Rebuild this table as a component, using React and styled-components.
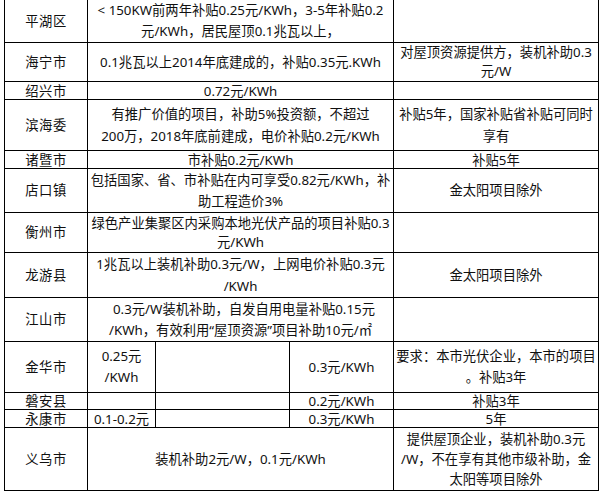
import styled, { createGlobalStyle } from "styled-components";

const GlobalStyle = createGlobalStyle`
  html, body {
    margin: 0;
    padding: 0;
    background: #ffffff;
  }
  body {
    font-family: "Noto Sans", "Noto Sans CJK SC", sans-serif;
  }
`;

const Page = styled.div`
  width: 603px;
  height: 493px;
  overflow: hidden;
  padding-left: 4px;
  box-sizing: border-box;
`;

const Table = styled.table`
  border-collapse: collapse;
  table-layout: fixed;
  width: 594px;
  margin-top: -1px;
  color: #101010;
  font-size: 13.3px;
`;

const Col = styled.col`
  width: ${(p) => p.$w}px;
`;

const Row = styled.tr`
  height: ${(p) => p.$h}px;
`;

const Cell = styled.td`
  border: 1px solid #000;
  padding: 0;
  text-align: center;
  vertical-align: middle;
  white-space: nowrap;
  line-height: ${(p) => p.$lh || 21}px;
`;

const Place = styled(Cell)`
  letter-spacing: 0.5px;
`;

const Line = styled.span`
  display: block;
`;

const widths = [83, 68, 134, 104, 205];

// 每一行: 地区, 行高, 文字行距, 内容
const rows = [
  {
    name: "平湖区",
    h: 43,
    lh: 21,
    cells: [
      { span: 3, lines: ["< 150KW前两年补贴0.25元/KWh，3-5年补贴0.2", "元/KWh，居民屋顶0.1兆瓦以上，"] },
      { lines: [] },
    ],
  },
  {
    name: "海宁市",
    h: 39,
    lh: 19,
    cells: [
      { span: 3, lines: ["0.1兆瓦以上2014年底建成的，补贴0.35元.KWh"] },
      { lines: ["对屋顶资源提供方，装机补助0.3", "元/W"] },
    ],
  },
  {
    name: "绍兴市",
    h: 18,
    lh: 16,
    cells: [{ span: 3, lines: ["0.72元/KWh"] }, { lines: [] }],
  },
  {
    name: "滨海委",
    h: 51,
    lh: 22,
    cells: [
      { span: 3, lines: ["有推广价值的项目，补助5%投资额，不超过", "200万，2018年底前建成，电价补贴0.2元/KWh"] },
      { lines: ["补贴5年，国家补贴省补贴可同时", "享有"] },
    ],
  },
  {
    name: "诸暨市",
    h: 18,
    lh: 16,
    cells: [{ span: 3, lines: ["市补贴0.2元/KWh"] }, { lines: ["补贴5年"] }],
  },
  {
    name: "店口镇",
    h: 44,
    lh: 21,
    cells: [
      { span: 3, lines: ["包括国家、省、市补贴在内可享受0.82元/KWh，补", "助工程造价3%"] },
      { lines: ["金太阳项目除外"] },
    ],
  },
  {
    name: "衡州市",
    h: 40,
    lh: 19,
    cells: [
      { span: 3, lines: ["绿色产业集聚区内采购本地光伏产品的项目补贴0.3", "元/KWh"] },
      { lines: [] },
    ],
  },
  {
    name: "龙游县",
    h: 45,
    lh: 22,
    cells: [
      { span: 3, lines: ["1兆瓦以上装机补助0.3元/W，上网电价补贴0.3元", "/KWh"] },
      { lines: ["金太阳项目除外"] },
    ],
  },
  {
    name: "江山市",
    h: 44,
    lh: 21,
    cells: [
      { span: 3, lines: ["\u00a0\u00a00.3元/W装机补助，自发自用电量补贴0.15元", "/KWh，有效利用“屋顶资源”项目补助10元/㎡"] },
      { lines: [] },
    ],
  },
  {
    name: "金华市",
    h: 51,
    lh: 21,
    cells: [
      { lines: ["0.25元", "/KWh"] },
      { lines: [] },
      { lines: ["0.3元/KWh"] },
      { lines: ["要求：本市光伏企业，本市的项目", "。补贴3年"] },
    ],
  },
  {
    name: "磐安县",
    h: 17,
    lh: 15,
    cells: [{ lines: [] }, { lines: [] }, { lines: ["0.2元/KWh"] }, { lines: ["补贴3年"] }],
  },
  {
    name: "永康市",
    h: 18,
    lh: 16,
    cells: [{ lines: ["0.1-0.2元"] }, { lines: [] }, { lines: ["0.3元/KWh"] }, { lines: ["5年"] }],
  },
  {
    name: "义乌市",
    h: 63,
    lh: 20,
    cells: [
      { span: 3, lines: ["装机补助2元/W，0.1元/KWh"] },
      { lines: ["提供屋顶企业，装机补助0.3元", "/W，不在享有其他市级补助，金", "太阳等项目除外"] },
    ],
  },
];

export default function App() {
  return (
    <Page>
      <GlobalStyle />
      <Table>
        <colgroup>
          {widths.map((w, i) => (
            <Col key={i} $w={w} />
          ))}
        </colgroup>
        <tbody>
          {rows.map((r) => (
            <Row key={r.name} $h={r.h}>
              <Place $lh={r.lh}>{r.name}</Place>
              {r.cells.map((c, i) => (
                <Cell key={i} colSpan={c.span || 1} $lh={r.lh}>
                  {c.lines.map((l, j) => (
                    <Line key={j}>{l}</Line>
                  ))}
                </Cell>
              ))}
            </Row>
          ))}
        </tbody>
      </Table>
    </Page>
  );
}
